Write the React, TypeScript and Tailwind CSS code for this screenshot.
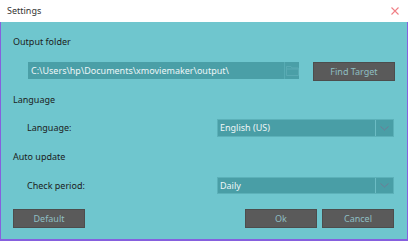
import React from "react";

const font = { fontFamily: '"Microsoft YaHei", "Noto Sans", "Open Sans", sans-serif' };

function Chevron() {
  return (
    <svg width="9" height="5" viewBox="0 0 9 5" fill="none">
      <path d="M0.5 0.5 L4.5 4 L8.5 0.5" stroke="#6e7d96" strokeWidth="1" />
    </svg>
  );
}

function Folder() {
  return (
    <svg width="13" height="10" viewBox="0 0 13 10" fill="none">
      <path d="M0.5 0.5 H5 L6 2 H12.5 V9.5 H0.5 Z M0.5 3 H12.5" stroke="#5aaab3" strokeWidth="1" />
    </svg>
  );
}

function Select({ value }: { value: string }) {
  return (
    <div className="flex h-full w-[177px] border border-[#5cb1b9] bg-[#499ea6]">
      <div className="flex flex-1 items-center pl-[2px] text-[9px] text-[#eef6f7]">{value}</div>
      <div className="flex w-[18px] items-center justify-center border-l border-[#6cbcc4]">
        <Chevron />
      </div>
    </div>
  );
}

function Btn({ label, w }: { label: string; w: string }) {
  return (
    <div className={`flex h-[19px] ${w} items-center justify-center border border-[#4d4d4d] bg-[#5a5a5a] text-[9px] text-[#8fbfc2]`}>
      {label}
    </div>
  );
}

export default function App() {
  return (
    <div className="flex h-[241px] w-[408px] flex-col" style={font}>
      <div className="flex h-[22px] items-center justify-between bg-white pl-[7px] pr-[9px]">
        <span className="text-[9px] text-[#333]">Settings</span>
        <svg width="8" height="8" viewBox="0 0 8 8">
          <path d="M0.5 0.5 L7.5 7.5 M7.5 0.5 L0.5 7.5" stroke="#f07f86" strokeWidth="1.1" />
        </svg>
      </div>
      <div className="flex flex-1 flex-col border-x border-b-2 border-[#8660de] bg-[#6fc6ce] pl-[12px] text-[#1c1c1c]">
        <div className="mt-[13px] h-[14px] text-[9px] leading-[14px]">Output folder</div>
        <div className="mt-[13px] flex h-[19px] items-start">
          <div className="ml-[15px] flex h-[17px] w-[271px] bg-[#4a9fa7]">
            <div className="flex flex-1 items-center pl-[3px] text-[9px] text-[#eef6f7]">
              C:\Users\hp\Documents\xmoviemaker\output\
            </div>
            <div className="flex w-[15px] items-center justify-center border-l border-[#57acb4]">
              <Folder />
            </div>
          </div>
          <div className="ml-[14px]">
            <Btn label="Find Target" w="w-[82px]" />
          </div>
        </div>
        <div className="mt-[12px] h-[14px] text-[9px] leading-[14px]">Language</div>
        <div className="mt-[12px] flex h-[18px] items-center">
          <div className="ml-[14px] w-[190px] text-[9px]">Language:</div>
          <Select value="English (US)" />
        </div>
        <div className="mt-[13px] h-[14px] text-[9px] leading-[14px]">Auto update</div>
        <div className="mt-[13px] flex h-[17px] items-center">
          <div className="ml-[14px] w-[190px] text-[9px]">Check period:</div>
          <Select value="Daily" />
        </div>
        <div className="mt-[15px] flex items-center">
          <Btn label="Default" w="w-[72px]" />
          <div className="ml-[160px]">
            <Btn label="Ok" w="w-[72px]" />
          </div>
          <div className="ml-[5px]">
            <Btn label="Cancel" w="w-[72px]" />
          </div>
        </div>
      </div>
    </div>
  );
}
